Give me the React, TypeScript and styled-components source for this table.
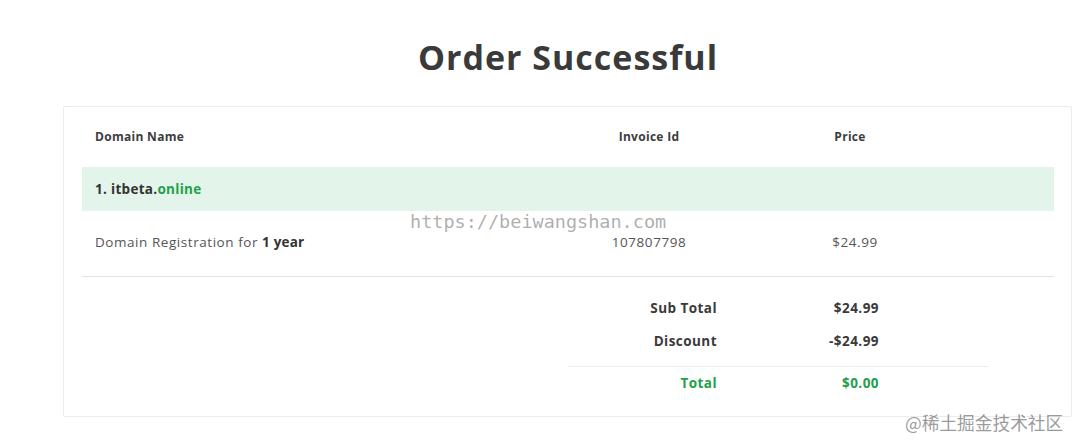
import React from "react";
import styled, { createGlobalStyle } from "styled-components";

const Global = createGlobalStyle`
  html, body { margin: 0; padding: 0; background: #fff; }
  body { font-family: "Open Sans", "Noto Sans", sans-serif; color: #3a3a3a; }
`;

const Page = styled.div`
  position: relative;
  width: 1080px;
  height: 445px;
  overflow: hidden;
  background: #fff;
`;

const Title = styled.h1`
  margin: 0;
  height: 106px;
  box-sizing: border-box;
  padding-top: 33px;
  text-align: center;
  font-size: 34px;
  line-height: 48px;
  font-weight: 700;
  color: #3a3a3a;
  letter-spacing: 1px;
  padding-left: 56px;
`;

const Card = styled.div`
  margin-left: 63px;
  width: 1009px;
  height: 311px;
  box-sizing: border-box;
  border: 1px solid #ececec;
  border-radius: 2px;
  padding: 0 17px 0 18px;
`;

const Row = styled.div<{ $h: number; $bg?: string; $line?: boolean }>`
  display: grid;
  grid-template-columns: 486px 162px 240px 1fr;
  align-items: center;
  height: ${(p) => p.$h}px;
  background: ${(p) => p.$bg || "transparent"};
  border-bottom: ${(p) => (p.$line ? "1px solid #e2e2e2" : "none")};
  box-sizing: border-box;
`;

const HeadCell = styled.div<{ $center?: boolean }>`
  font-size: 12px;
  font-weight: 700;
  letter-spacing: 0.3px;
  color: #3d3d3d;
  text-align: ${(p) => (p.$center ? "center" : "left")};
  padding-left: ${(p) => (p.$center ? "0" : "13px")};
  margin-top: -2px;
`;

const DomainTitle = styled.div`
  padding-left: 13px;
  font-size: 13.5px;
  font-weight: 700;
  letter-spacing: 0.3px;
  color: #333;
`;

const Green = styled.span`
  color: #22a04b;
`;

const Cell = styled.div<{ $center?: boolean; $shift?: number }>`
  font-size: 13.5px;
  letter-spacing: 0.55px;
  color: #555;
  text-align: ${(p) => (p.$center ? "center" : "left")};
  padding-left: ${(p) => (p.$shift ?? 0)}px;
  margin-top: -3px;
`;

const Strong = styled.b`
  color: #333;
  font-weight: 700;
  letter-spacing: 0.2px;
`;

const Summary = styled.div`
  margin-left: 486px;
  width: 420px;
  padding-top: 14px;
`;

const SumRow = styled.div<{ $h: number; $green?: boolean }>`
  display: grid;
  grid-template-columns: 149px 162px;
  align-items: center;
  height: ${(p) => p.$h}px;
  font-size: 13.5px;
  font-weight: 700;
  letter-spacing: 0.45px;
  color: ${(p) => (p.$green ? "#22a04b" : "#3a3a3a")};
  & > * { text-align: right; }
`;

const SumLine = styled.div`
  height: 1px;
  background: #ececec;
  margin-top: 9px;
`;

const Watermark = styled.div`
  position: absolute;
  left: 410px;
  top: 211px;
  font-family: "DejaVu Sans Mono", monospace;
  font-size: 18.5px;
  color: rgba(120, 120, 120, 0.6);
`;

const Credit = styled.div`
  position: absolute;
  left: 905px;
  top: 409px;
  font-family: "Noto Sans CJK SC", sans-serif;
  font-size: 17.7px;
  color: rgba(110, 110, 110, 0.7);
`;

export default function App() {
  return (
    <Page>
      <Global />
      <Title>Order Successful</Title>
      <Card>
        <Row $h={60}>
          <HeadCell>Domain Name</HeadCell>
          <HeadCell $center>Invoice Id</HeadCell>
          <HeadCell $center>Price</HeadCell>
        </Row>
        <Row $h={44} $bg="#e3f4ea">
          <DomainTitle>
            1. itbeta.<Green>online</Green>
          </DomainTitle>
        </Row>
        <Row $h={66} $line>
          <Cell $shift={13}>
            Domain Registration for <Strong>1 year</Strong>
          </Cell>
          <Cell $center>107807798</Cell>
          <Cell $center $shift={10}>$24.99</Cell>
        </Row>
        <Summary>
          <SumRow $h={33}>
            <span>Sub Total</span>
            <span>$24.99</span>
          </SumRow>
          <SumRow $h={33}>
            <span>Discount</span>
            <span>-$24.99</span>
          </SumRow>
          <SumLine />
          <SumRow $h={32} $green>
            <span>Total</span>
            <span>$0.00</span>
          </SumRow>
        </Summary>
      </Card>
      <Watermark>https://beiwangshan.com</Watermark>
      <Credit>@稀土掘金技术社区</Credit>
    </Page>
  );
}
